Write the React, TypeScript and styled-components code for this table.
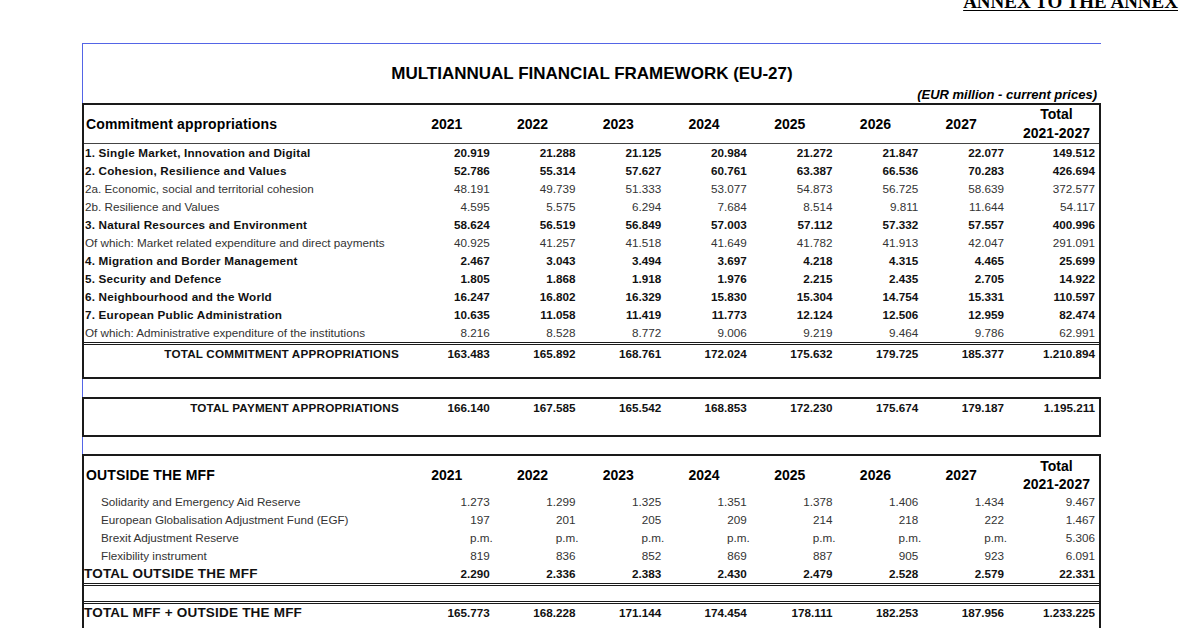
import React from "react";
import styled, { createGlobalStyle } from "styled-components";

const Global = createGlobalStyle`
  html, body { margin: 0; padding: 0; background: #fff; overflow: hidden; }
  body { font-family: "Liberation Sans", Arial, sans-serif; color: #111; }
`;

const Page = styled.div`
  width: 1200px;
  height: 628px;
  overflow: hidden;
`;

const AnnexBar = styled.div`
  display: flex;
  justify-content: flex-end;
  padding-right: 22px;
  margin-top: -8px;
  height: 19px;
`;

const Annex = styled.span`
  font-family: "Liberation Serif", "Times New Roman", serif;
  font-weight: 700;
  font-size: 19px;
  line-height: 19px;
  color: #000;
  text-decoration: underline;
  text-decoration-thickness: 1px;
  text-underline-offset: 2px;
`;

const Frame = styled.div`
  margin: 32px 0 0 82px;
  width: 1018px;
  border-top: 1px solid #5465e6;
  border-left: 1px solid #5465e6;
  min-height: 700px;
`;

const Title = styled.div`
  padding-top: 20px;
  text-align: center;
  font-size: 17px;
  line-height: 20px;
  font-weight: 700;
  color: #000;
`;

const Subtitle = styled.div`
  margin-top: 3px;
  padding-right: 4px;
  text-align: right;
  font-size: 13px;
  line-height: 16px;
  font-weight: 700;
  font-style: italic;
  color: #000;
`;

const Box = styled.div<{ $gap?: number; $padBottom?: number }>`
  margin-left: -1px;
  margin-top: ${(p) => p.$gap ?? 0}px;
  border: 2px solid #1a1a1a;
  padding-bottom: ${(p) => p.$padBottom ?? 0}px;
  background: #fff;
`;

const Row = styled.div<{ $h?: number; $rule?: "double" | "single" | "none" }>`
  display: grid;
  grid-template-columns: 320px repeat(7, 1fr) 95px;
  height: ${(p) => p.$h ?? 18}px;
  align-items: center;
  border-top: ${(p) =>
    p.$rule === "double" ? "3px double #1a1a1a" : "none"};
  border-bottom: ${(p) => (p.$rule === "single" ? "1px solid #444" : "none")};
`;

const Spacer = styled.div<{ $h: number }>`
  height: ${(p) => p.$h}px;
`;

const Label = styled.div<{
  $bold?: boolean;
  $indent?: number;
  $right?: boolean;
  $size?: number;
}>`
  white-space: nowrap;
  padding-left: ${(p) => p.$indent ?? 1}px;
  padding-right: ${(p) => (p.$right ? 5 : 0)}px;
  text-align: ${(p) => (p.$right ? "right" : "left")};
  font-size: ${(p) => p.$size ?? 11.7}px;
  font-weight: ${(p) => (p.$bold ? 700 : 400)};
  letter-spacing: ${(p) => (p.$bold ? 0.2 : 0)}px;
  color: ${(p) => (p.$bold ? "#111" : "#333")};
  line-height: 18px;
`;

const Num = styled.div<{ $bold?: boolean; $total?: boolean }>`
  text-align: right;
  white-space: nowrap;
  padding-right: ${(p) => (p.$total ? 4 : 0)}px;
  font-size: 11.7px;
  font-weight: ${(p) => (p.$bold ? 700 : 400)};
  color: ${(p) => (p.$bold ? "#111" : "#333")};
  line-height: 18px;
`;

const PM = styled.span`
  margin-right: -3px;
`;

const Head = styled.div<{ $total?: boolean; $left?: boolean }>`
  font-size: 14px;
  font-weight: 700;
  color: #000;
  text-align: ${(p) => (p.$left ? "left" : "center")};
  padding-left: ${(p) => (p.$total ? 10 : p.$left ? 2 : 0)}px;
  letter-spacing: ${(p) => (p.$left ? 0.15 : 0)}px;
  line-height: 18px;
  white-space: nowrap;
`;

const HeadTotal = styled(Head)<{ $lh: number }>`
  line-height: ${(p) => p.$lh}px;
`;

const years = ["2021", "2022", "2023", "2024", "2025", "2026", "2027"];

type DataLine = { label: string; bold?: boolean; values: string[] };

const commitments: DataLine[] = [
  { label: "1. Single Market, Innovation and Digital", bold: true, values: ["20.919", "21.288", "21.125", "20.984", "21.272", "21.847", "22.077", "149.512"] },
  { label: "2. Cohesion, Resilience and Values", bold: true, values: ["52.786", "55.314", "57.627", "60.761", "63.387", "66.536", "70.283", "426.694"] },
  { label: "2a. Economic, social and territorial cohesion", values: ["48.191", "49.739", "51.333", "53.077", "54.873", "56.725", "58.639", "372.577"] },
  { label: "2b. Resilience and Values", values: ["4.595", "5.575", "6.294", "7.684", "8.514", "9.811", "11.644", "54.117"] },
  { label: "3. Natural Resources and Environment", bold: true, values: ["58.624", "56.519", "56.849", "57.003", "57.112", "57.332", "57.557", "400.996"] },
  { label: "Of which: Market related expenditure and direct payments", values: ["40.925", "41.257", "41.518", "41.649", "41.782", "41.913", "42.047", "291.091"] },
  { label: "4. Migration and Border Management", bold: true, values: ["2.467", "3.043", "3.494", "3.697", "4.218", "4.315", "4.465", "25.699"] },
  { label: "5. Security and Defence", bold: true, values: ["1.805", "1.868", "1.918", "1.976", "2.215", "2.435", "2.705", "14.922"] },
  { label: "6. Neighbourhood and the World", bold: true, values: ["16.247", "16.802", "16.329", "15.830", "15.304", "14.754", "15.331", "110.597"] },
  { label: "7. European Public Administration", bold: true, values: ["10.635", "11.058", "11.419", "11.773", "12.124", "12.506", "12.959", "82.474"] },
  { label: "Of which: Administrative expenditure of the institutions", values: ["8.216", "8.528", "8.772", "9.006", "9.219", "9.464", "9.786", "62.991"] },
];

const totalCommitment = ["163.483", "165.892", "168.761", "172.024", "175.632", "179.725", "185.377", "1.210.894"];
const totalPayment = ["166.140", "167.585", "165.542", "168.853", "172.230", "175.674", "179.187", "1.195.211"];

const outside: DataLine[] = [
  { label: "Solidarity and Emergency Aid Reserve", values: ["1.273", "1.299", "1.325", "1.351", "1.378", "1.406", "1.434", "9.467"] },
  { label: "European Globalisation Adjustment Fund (EGF)", values: ["197", "201", "205", "209", "214", "218", "222", "1.467"] },
  { label: "Brexit Adjustment Reserve", values: ["p.m.", "p.m.", "p.m.", "p.m.", "p.m.", "p.m.", "p.m.", "5.306"] },
  { label: "Flexibility instrument", values: ["819", "836", "852", "869", "887", "905", "923", "6.091"] },
];

const totalOutside = ["2.290", "2.336", "2.383", "2.430", "2.479", "2.528", "2.579", "22.331"];
const totalAll = ["165.773", "168.228", "171.144", "174.454", "178.111", "182.253", "187.956", "1.233.225"];

const Values: React.FC<{ values: string[]; bold?: boolean }> = ({ values, bold }) => (
  <>
    {values.map((v, i) => (
      <Num key={i} $bold={bold} $total={i === values.length - 1}>
        {v === "p.m." ? <PM>{v}</PM> : v}
      </Num>
    ))}
  </>
);

const HeaderYears: React.FC<{ lh: number }> = ({ lh }) => (
  <>
    {years.map((y) => (
      <Head key={y}>{y}</Head>
    ))}
    <HeadTotal $total $lh={lh}>
      Total
      <br />
      2021-2027
    </HeadTotal>
  </>
);

export default function App() {
  return (
    <Page>
      <Global />
      <AnnexBar>
        <Annex>ANNEX TO THE ANNEX</Annex>
      </AnnexBar>
      <Frame>
        <Title>MULTIANNUAL FINANCIAL FRAMEWORK (EU-27)</Title>
        <Subtitle>(EUR million - current prices)</Subtitle>

        <Box $padBottom={16}>
          <Row $h={38} $rule="single">
            <Head $left>Commitment appropriations</Head>
            <HeaderYears lh={19} />
          </Row>
          {commitments.map((r) => (
            <Row key={r.label}>
              <Label $bold={r.bold}>{r.label}</Label>
              <Values values={r.values} bold={r.bold} />
            </Row>
          ))}
          <Row $h={16} $rule="double">
            <Label $bold $right>
              TOTAL COMMITMENT APPROPRIATIONS
            </Label>
            <Values values={totalCommitment} bold />
          </Row>
        </Box>

        <Box $gap={18} $padBottom={18}>
          <Row>
            <Label $bold $right>
              TOTAL PAYMENT APPROPRIATIONS
            </Label>
            <Values values={totalPayment} bold />
          </Row>
        </Box>

        <Box $gap={17} $padBottom={30}>
          <Row $h={37}>
            <Head $left>OUTSIDE THE MFF</Head>
            <HeaderYears lh={18} />
          </Row>
          {outside.map((r) => (
            <Row key={r.label}>
              <Label $indent={17}>{r.label}</Label>
              <Values values={r.values} />
            </Row>
          ))}
          <Row>
            <Label $bold $indent={0} $size={13.5}>
              TOTAL OUTSIDE THE MFF
            </Label>
            <Values values={totalOutside} bold />
          </Row>
          <Row $h={15} $rule="double" />
          <Row $h={16} $rule="double">
            <Label $bold $indent={0} $size={13.5}>
              TOTAL MFF + OUTSIDE THE MFF
            </Label>
            <Values values={totalAll} bold />
          </Row>
          <Spacer $h={20} />
        </Box>
      </Frame>
    </Page>
  );
}
